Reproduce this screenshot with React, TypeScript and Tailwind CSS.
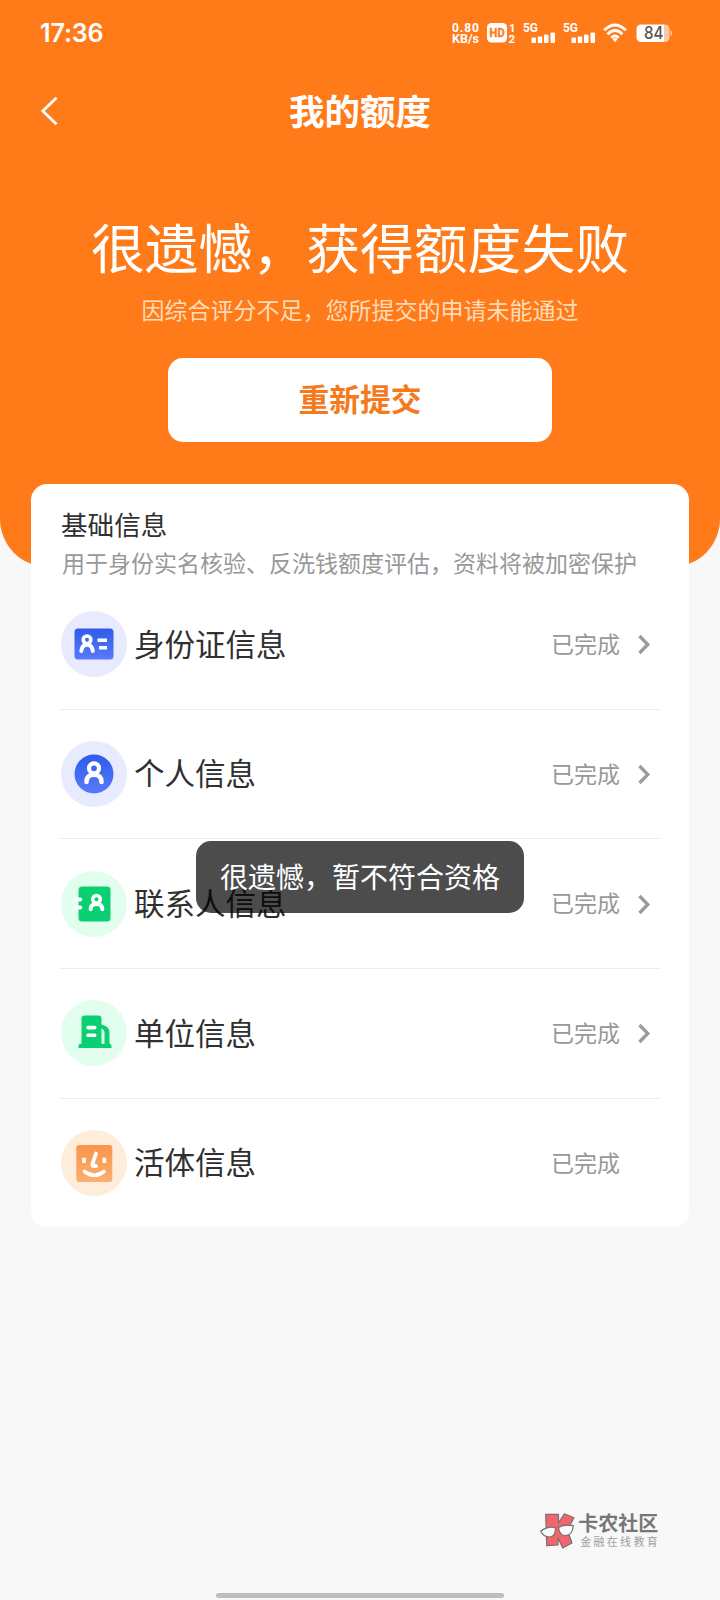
import React from "react";

function Signal() {
  return (
    <svg width="32" height="22" viewBox="0 0 32 22" fill="#fff">
      <text x="0" y="10.2" fontSize="12.5" fontWeight="700" fontFamily="Roboto, sans-serif" textLength="15" lengthAdjust="spacingAndGlyphs">5G</text>
      <rect x="8.5" y="15.5" width="4.5" height="5.5" rx="1" />
      <rect x="14.8" y="14.5" width="4.500" height="6.5" rx="1" />
      <rect x="21" y="12.5" width="4.500" height="8.5" rx="1" />
      <rect x="27.5" y="10.5" width="4.500" height="10.5" rx="1" />
    </svg>
  );
}

function StatusBar() {
  return (
    <div className="flex h-[66px] items-center justify-between pl-[40px] pr-[47px] text-white">
      <div className="w-[70px] pt-px font-[Inter,sans-serif] text-[25px] font-semibold leading-none tracking-[-0.1px]">17:36</div>
      <div className="flex items-center">
        <svg width="28" height="22" viewBox="0 0 28 22" fill="#fff" fontFamily="Roboto, sans-serif" fontWeight="700" fontSize="12">
          <text x="0" y="10" textLength="27">0.80</text>
          <text x="0" y="20.600" textLength="27" lengthAdjust="spacingAndGlyphs">KB/s</text>
        </svg>
        <svg className="ml-[7px]" width="30" height="22" viewBox="0 0 30 22" fill="#fff" fontFamily="Roboto, sans-serif" fontWeight="700">
          <rect x="0" y="1" width="20" height="19.5" rx="4.5" />
          <text x="2.6" y="15.2" fontSize="12.5" fill="#ff7b1a" stroke="#ff7b1a" strokeWidth=".4" textLength="15" lengthAdjust="spacingAndGlyphs">HD</text>
          <text x="22" y="9.8" fontSize="11.5">1</text>
          <text x="21.5" y="20.600" fontSize="11.5">2</text>
        </svg>
        <div className="ml-[6px] flex gap-[8px]">
          <Signal />
          <Signal />
        </div>
        <svg className="ml-[8px]" width="24" height="22" viewBox="0 0 24 22" fill="none" stroke="#fff" strokeWidth="2.900">
          <path d="M1.200 8.300 Q12 -2.300 22.800 8.300" />
          <path d="M4.600 12.200 Q12 4.800 19.400 12.200" />
          <path d="M8.300 15.800 Q12 12.300 15.700 15.800" />
          <path d="M9.400 17 Q12 15 14.600 17 L12 20.200 Z" fill="#fff" stroke="none" />
        </svg>
        <svg className="ml-[9px]" width="37" height="22" viewBox="0 0 37 22">
          <path d="M5 2.500 H28 V20 H5 A4.500 4.500 0 0 1 .5 15.500 V7 A4.500 4.500 0 0 1 5 2.500Z" fill="#fff" />
          <path d="M28 2.500 H29 A4.500 4.500 0 0 1 33.500 7 V15.500 A4.500 4.500 0 0 1 29 20 H28Z M34.500 8 Q36 9 36 11.200 Q36 13.500 34.500 14.500Z" fill="#ffc9a0" />
          <text x="8" y="17.400" fontSize="17" fontWeight="500" fontFamily="Inter, sans-serif" fill="#5c5550" textLength="19.500" lengthAdjust="spacingAndGlyphs">84</text>
        </svg>
      </div>
    </div>
  );
}

function IdIcon() {
  return (
    <svg width="66" height="66" viewBox="0 0 66 66" fill="none" strokeLinecap="round">
      <defs>
        <linearGradient id="blue" x1="0" y1="0" x2="0" y2="1">
          <stop offset="0" stopColor="#2f5be9" />
          <stop offset="1" stopColor="#577bfb" />
        </linearGradient>
      </defs>
      <circle cx="33" cy="33" r="33" fill="#e8ebfd" />
      <rect x="13.500" y="17.500" width="39" height="31" rx="3.500" fill="url(#blue)" />
      <circle cx="26" cy="28.800" r="3.800" stroke="#fff" strokeWidth="3.600" />
      <path d="M20.300 40 C20.800 36 22.500 33.800 26 33.800 C29.500 33.800 31.300 36 31.800 40" stroke="#fff" strokeWidth="4" />
      <path d="M36.500 29.300 H46 M38 36.800 H46" stroke="#fff" strokeWidth="3.500" strokeLinecap="butt" />
    </svg>
  );
}

function PersonIcon() {
  return (
    <svg width="66" height="66" viewBox="0 0 66 66" fill="none" strokeLinecap="round">
      <circle cx="33" cy="33" r="33" fill="#e8ebfd" />
      <circle cx="33" cy="33" r="19.500" fill="url(#blue)" />
      <circle cx="33" cy="27.300" r="5" stroke="#fff" strokeWidth="4.200" />
      <path d="M25.500 41 C25.500 36.500 28 33.800 33 33.800 C38 33.800 40.500 36.500 40.500 41" stroke="#fff" strokeWidth="4.600" />
    </svg>
  );
}

function ContactIcon() {
  return (
    <svg width="66" height="66" viewBox="0 0 66 66" fill="none" strokeLinecap="round">
      <circle cx="33" cy="33" r="33" fill="#e1feee" />
      <rect x="17.500" y="15.500" width="32" height="35" rx="3.500" fill="#0bd072" />
      <path d="M15 28.500 H19.300 M15 36.500 H19.300" stroke="#fff" strokeWidth="3.800" />
      <circle cx="35.500" cy="28.200" r="3.800" stroke="#fff" strokeWidth="3.500" />
      <path d="M29.600 38.200 C29.800 34.800 31.700 33 35.500 33 C39.300 33 41.200 34.800 41.400 38.200" stroke="#fff" strokeWidth="4" />
    </svg>
  );
}

function CompanyIcon() {
  return (
    <svg width="66" height="66" viewBox="0 0 66 66" fill="none">
      <circle cx="33" cy="33" r="33" fill="#e1feee" />
      <path d="M20.500 45 V18.500 A3 3 0 0 1 23.500 15.500 H37.500 A3 3 0 0 1 40.500 18.500 V45Z" fill="#0bd072" />
      <path d="M39.500 24.300 C46.500 26 48.500 28.500 48.500 33 V45 H43.500 V33 C43.500 30.500 42.500 29 39.500 28.500Z" fill="#0bd072" />
      <path d="M17.500 48 V46 Q17.500 43.800 19.600 43.800 H48.300 Q50.500 43.800 50.500 46 V48Z" fill="#0bd072" />
      <path d="M27 27.600 H33.700 M27 35.300 H33.700" stroke="#fff" strokeWidth="3.600" strokeLinecap="round" />
    </svg>
  );
}

function FaceIcon() {
  return (
    <svg width="66" height="66" viewBox="0 0 66 66" fill="none" strokeLinecap="round" stroke="#fff">
      <defs>
        <linearGradient id="orange" x1="0" y1="0" x2="0" y2="1">
          <stop offset="0" stopColor="#f8954a" />
          <stop offset="1" stopColor="#fbaf6f" />
        </linearGradient>
      </defs>
      <circle cx="33" cy="33" r="33" fill="#feeddb" stroke="none" />
      <rect x="15.300" y="15" width="36" height="37" rx="3" fill="url(#orange)" stroke="none" />
      <path d="M23 27.800 V33 M43.300 27.800 V33" strokeWidth="3.600" strokeLinecap="butt" />
      <path d="M35 23.500 L31.500 34 Q31 36 33 36 H35" strokeWidth="3.800" />
      <path d="M23.500 41.500 Q33.300 49 43 41.500" strokeWidth="3.600" />
    </svg>
  );
}

function Row({ icon, label, arrow = true, last = false }: { icon: React.ReactNode; label: string; arrow?: boolean; last?: boolean }) {
  return (
    <li className={`flex items-center ${last ? "h-[128.700px]" : "h-[129.700px] border-b border-[#ededed]"}`}>
      <span className="ml-px shrink-0">{icon}</span>
      <span className="ml-[7px] flex-1 pb-[3px] text-[30.500px] leading-none text-[#303030]">{label}</span>
      <span className="pb-[2px] text-[23px] leading-none text-[#989898]">已完成</span>
      <span className="ml-[17px] mr-[8px] w-[15px]">
        {arrow && (
          <svg width="15" height="22" viewBox="0 0 15 22" fill="none" stroke="#9b9b9b" strokeWidth="3.300">
            <path d="M2.500 3 L10.800 11.500 L2.500 20" />
          </svg>
        )}
      </span>
    </li>
  );
}

function Watermark() {
  return (
    <div className="flex items-center">
      <svg width="36" height="38" viewBox="0 0 36 38" stroke="#77706f" strokeWidth="1.200" strokeLinejoin="round">
        <path d="M5.700 2.300 H18.500 V11 L24.300 1.800 L34 5.700 L27.300 18 L32 31 L22.700 36 L18 26 V33 L6.700 33.700Z" fill="#f2656e" />
        <path d="M.8 19 Q8 13.800 15.300 15.500 Q16 24.500 10 25 Q3 25 .8 19Z M18.500 15.500 Q25 12 33.300 13.700 Q32.500 23 25.500 23.700 Q19.500 23.500 18.500 15.500Z" fill="#fafafa" />
      </svg>
      <div className="-mt-[2px] ml-[2px] flex flex-col gap-[3px]">
        <span className="text-[20px] font-bold leading-[20px] text-[#777]">卡农社区</span>
        <span className="pl-[2px] text-[11px] leading-[11px] tracking-[2.300px] text-[#a0a0a0]">金融在线教育</span>
      </div>
    </div>
  );
}

export default function App() {
  return (
    <div className="relative flex h-[1600px] w-[720px] flex-col overflow-hidden bg-[#f8f8f8] font-['Noto_Sans_CJK_SC',sans-serif]">
      <header className="h-[567px] shrink-0 rounded-b-[48px] bg-[#ff7b1a]">
        <StatusBar />
        <div className="grid h-[90px] grid-cols-[60px_1fr_60px] items-center">
          <svg className="ml-[40px]" width="18" height="30" viewBox="0 0 18 30" fill="none" stroke="#fff" strokeWidth="2.800">
            <path d="M16.500 1.800 L2.800 15 L16.500 28.200" />
          </svg>
          <h1 className="pb-[2px] text-center text-[35.500px] font-bold leading-none text-white">我的额度</h1>
        </div>
        <div className="flex flex-col items-center">
          <h2 className="mt-[62px] text-[53.800px] leading-[56px] text-white">很遗憾，获得额度失败</h2>
          <p className="mt-[22px] text-[23px] leading-[26px] text-[#ffdcb9]">因综合评分不足，您所提交的申请未能通过</p>
          <button className="mt-[36px] h-[84px] w-[384px] rounded-[15px] bg-white pb-[4px] text-[30.800px] font-bold leading-none text-[#f57a1d]">重新提交</button>
        </div>
      </header>

      <main className="mx-[31px] -mt-[83px] h-[743px] shrink-0 rounded-[16px] bg-white pl-[29px] pr-[29px] pt-[25px]">
        <h3 className="pl-[1px] text-[26.600px] leading-[30px] text-[#303030]">基础信息</h3>
        <p className="mt-[10px] whitespace-nowrap pl-[2px] text-[23px] leading-[26px] text-[#989898]">用于身份实名核验、反洗钱额度评估，资料将被加密保护</p>
        <ul className="mt-[5px]">
          <Row icon={<IdIcon />} label="身份证信息" />
          <Row icon={<PersonIcon />} label="个人信息" />
          <Row icon={<ContactIcon />} label="联系人信息" />
          <Row icon={<CompanyIcon />} label="单位信息" />
          <Row icon={<FaceIcon />} label="活体信息" arrow={false} last />
        </ul>
      </main>

      <footer className="flex flex-1 flex-col items-center justify-end pb-[2px]">
        <div className="mb-[43px] mr-[60px] self-end">
          <Watermark />
        </div>
        <div className="h-[5px] w-[288px] rounded-full bg-[#bdbdbd]" />
      </footer>

      <div role="status" className="absolute left-[196px] top-[841px] flex h-[72px] w-[328px] items-center justify-center rounded-[15px] bg-black/70 pb-[2px] text-[28px] leading-none text-white">
        很遗憾，暂不符合资格
      </div>
    </div>
  );
}
